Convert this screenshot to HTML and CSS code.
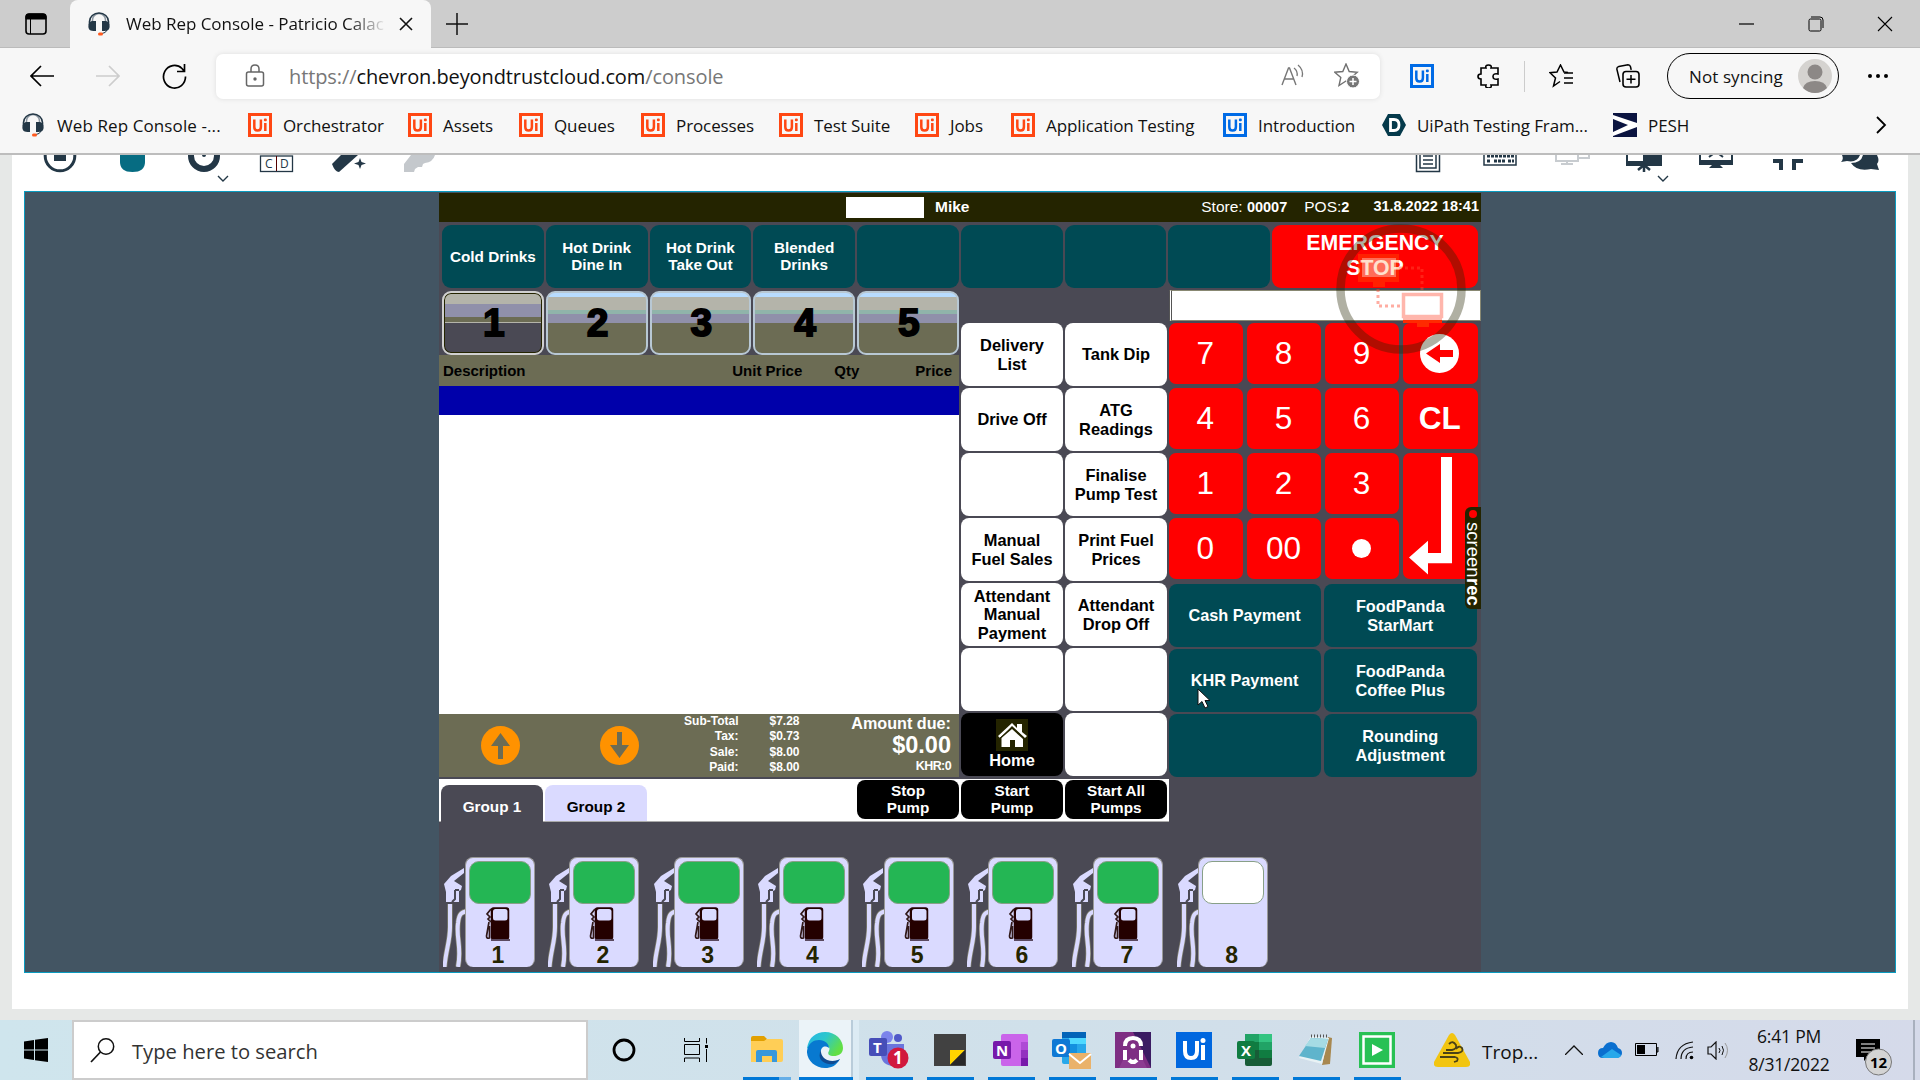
FILE: index.html
```html
<!DOCTYPE html>
<html lang="en">
<head>
<meta charset="utf-8">
<title>Web Rep Console</title>
<link rel="stylesheet" href="styles.css">
</head>
<body>
<svg class="defs" width="0" height="0">
  <symbol id="headset" viewBox="0 0 22 24"><path d="M4.500 14V8a6.500 6.500 0 0 1 13 0v6" fill="none" stroke="#8a95a0" stroke-width="1.500"/><path d="M1.500 13V9.500a9.500 8.500 0 0 1 19 0V13" fill="none" stroke="#233746" stroke-width="1.600"/><path d="M4 9h4v10H5.500C1 19 0 16 .5 13 1 10.500 2 9.500 4 9zM18 9h-4v10h2.500c4.500 0 5.500-3 5-6-.5-2.500-1.500-3.500-3.500-4z" fill="#233746"/><path d="M19 18q-1 3-5 3.500" fill="none" stroke="#233746"/><rect x="10" y="20.500" width="5" height="3" rx="1.500" fill="#ff5a1f"/></symbol>
  <symbol id="ui" viewBox="0 0 24 24"><path d="M1.500 1.500h21v21h-21z" fill="none" stroke="currentColor" stroke-width="3"/><path d="M6.300 6.500v7.500q0 3.600 3.300 3.600t3.300-3.600V6.500M17.300 10v8" fill="none" stroke="currentColor" stroke-width="2.500"/><rect x="15.900" y="5.400" width="2.900" height="2.900" rx="1" fill="currentColor"/></symbol>
  <symbol id="nozzle" viewBox="0 0 90 110"><path d="M1.500 110C3 92 7 85 7 70V47M15 110c4-20-2-28 0-44 1-10 4-11 10-12" fill="none" stroke="#828270" stroke-width="5.400"/><path d="M1.500 110C3 92 7 85 7 70V47M15 110c4-20-2-28 0-44 1-10 4-11 10-12" fill="none" stroke="#dadaff" stroke-width="4"/><path d="M8 19L21 11v5L11 24l8 5-1 4-2 1v11H3V35L1 27z" fill="#dadaff"/><path d="M12 33v9l-3 3M12 33h4" stroke="#4a4954" fill="none" stroke-width="2"/></symbol>
  <symbol id="pumpicon" viewBox="0 0 26 34"><rect x="6.500" y="1" width="17" height="31" rx="2" fill="#240000" stroke="#240000" stroke-width="1.500"/><rect x="8" y="2" width="14.500" height="11.500" rx="2.500" fill="#dadaff"/><path d="M6 2L2 7l3 3-2 2 3 3M4 15L1.500 29q0 3 3 2V19" fill="none" stroke="#301818" stroke-width="1.700"/><path d="M6 33h19" stroke="#5a4a60" stroke-width="2"/></symbol>
</svg>

<header class="tabstrip">
  <svg class="workspaces" width="22" height="22" viewBox="0 0 22 22"><rect x="1" y="1" width="20" height="20" rx="3" fill="none" stroke="#000" stroke-width="1.600"/><path d="M1 6V3.500Q1 1 4 1h14q3 0 3 2.500V6zM5.500 6v15" stroke="#000"/></svg>
  <div class="tab"><svg width="22" height="24"><use href="#headset"/></svg><span class="tab-title">Web Rep Console - Patricio Calac</span><svg width="14" height="14"><path d="M1 1l12 12M13 1L1 13" stroke="#111" stroke-width="1.600"/></svg></div>
  <svg class="newtab" width="22" height="22"><path d="M11 0v22M0 11h22" stroke="#111" stroke-width="1.500"/></svg>
  <div class="winctl">
    <svg width="16" height="16"><path d="M0 8h15" stroke="#000" stroke-width="1.200"/></svg>
    <svg width="16" height="16"><rect x="1" y="3" width="12" height="12" rx="1.500" fill="none" stroke="#000"/><path d="M3 1h9q3 0 3 3v8" fill="none" stroke="#000"/></svg>
    <svg width="16" height="16"><path d="M1 1l14 14M15 1L1 15" stroke="#000" stroke-width="1.100"/></svg>
  </div>
</header>

<nav class="toolbar">
  <svg class="nav" width="24" height="24"><path d="M24 12H1M11 2L1 12l10 10" fill="none" stroke="#000" stroke-width="1.700"/></svg>
  <svg class="nav" width="24" height="24"><path d="M0 12h23M13 2l10 10-10 10" fill="none" stroke="#cdcdcd" stroke-width="1.700"/></svg>
  <svg class="nav" width="25" height="25"><path d="M23.500 12.500A11 11.300 0 1 1 20 4.500L22 7M22.500 0v7.500H15" fill="none" stroke="#000" stroke-width="1.700"/></svg>
  <div class="address">
    <svg class="lock" width="20" height="24"><rect x="1.500" y="8" width="17" height="14" rx="2" fill="none" stroke="#666" stroke-width="1.500"/><path d="M6 8V5q0-4 4-4t4 4v3" fill="none" stroke="#666" stroke-width="1.500"/><circle cx="10" cy="15" r="1.700" fill="#666"/></svg>
    <span class="url">https://<b>chevron.beyondtrustcloud.com</b>/console</span>
    <svg width="24" height="24" class="read"><path d="M1 21L7.500 4h1L15 21M3.500 15h9" fill="none" stroke="#777" stroke-width="1.400"/><path d="M13 4q4 3 3 8M17 1q6 5 4 12" fill="none" stroke="#777" stroke-width="1.300"/></svg>
    <svg width="26" height="26"><path d="M12 1l3.200 7.500 8 .7-6 5.300 1.800 8L12 18l-7 4.500 1.800-8-6-5.300 8-.7z" fill="none" stroke="#707070" stroke-width="1.400"/><circle cx="19" cy="18.500" r="6.500" fill="#757575" stroke="#fff"/><path d="M19 15v7M15.500 18.500h7" stroke="#fff" stroke-width="1.500"/></svg>
  </div>
  <div class="tools">
    <svg class="blue" width="24" height="24"><use href="#ui"/></svg>
    <svg width="24" height="24"><path d="M4 4h5q-1-3 2.500-3T14 4h7v6q-5-1-5 2.500t5 2.500v6h-7q1 3-2.500 3T9 21H4v-6q-3 0-3-2.500T4 10z" fill="none" stroke="#000" stroke-width="1.600"/></svg>
    <i class="divider"></i>
    <svg width="25" height="24"><path d="M11 17.500L4.500 22l2-8L1 8.700l7-.7L11.500 1 15 8l4 .5M15 9h9M15 14h9M15 19h9" fill="none" stroke="#000" stroke-width="1.500"/></svg>
    <svg width="24" height="24"><path d="M4 18L.8 5q0-2 2-2.500L12 .8q2 0 2.500 2l.7 3" fill="none" stroke="#000" stroke-width="1.500"/><rect x="7" y="7.500" width="16" height="15.500" rx="3" fill="#f7f7f7" stroke="#000" stroke-width="1.600"/><path d="M15 11v8.500M10.500 15.300h9" stroke="#000" stroke-width="1.500"/></svg>
  </div>
  <div class="profile"><span>Not syncing</span><svg width="34" height="34"><circle cx="17" cy="17" r="17" fill="#d5d3d0"/><circle cx="17" cy="13" r="7.500" fill="#8c8886"/><path d="M5 29q2-7 12-7t12 7A17 17 0 0 1 5 29z" fill="#8c8886"/></svg></div>
  <svg class="more" width="22" height="6"><circle cx="3" cy="3" r="2" /><circle cx="11" cy="3" r="2"/><circle cx="19" cy="3" r="2"/></svg>
</nav>

<nav class="bookmarks">
  <a><svg width="22" height="24"><use href="#headset"/></svg><span>Web Rep Console -...</span></a>
  <a><svg width="24" height="24"><use href="#ui"/></svg><span>Orchestrator</span></a>
  <a><svg width="24" height="24"><use href="#ui"/></svg><span>Assets</span></a>
  <a><svg width="24" height="24"><use href="#ui"/></svg><span>Queues</span></a>
  <a><svg width="24" height="24"><use href="#ui"/></svg><span>Processes</span></a>
  <a><svg width="24" height="24"><use href="#ui"/></svg><span>Test Suite</span></a>
  <a><svg width="24" height="24"><use href="#ui"/></svg><span>Jobs</span></a>
  <a><svg width="24" height="24"><use href="#ui"/></svg><span>Application Testing</span></a>
  <a><svg class="blue" width="24" height="24"><use href="#ui"/></svg><span>Introduction</span></a>
  <a><svg width="24" height="24"><path d="M6 1h12l6 11-6 11H6L0 12z" fill="#053a4b"/><path d="M8.500 6.500H12q5 0 5 5.500t-5 5.500H8.500z" fill="none" stroke="#fff" stroke-width="2.800"/></svg><span>UiPath Testing Fram...</span></a>
  <a><svg width="24" height="24"><path d="M0 0h24v24H0z" fill="#0b1440"/><path d="M0 2l24 8v4L0 23v-4l15-7L0 6z" fill="#fff"/></svg><span>PESH</span></a>
  <svg class="overflow" width="11" height="18"><path d="M1 1l8 8-8 8" fill="none" stroke="#000" stroke-width="1.800"/></svg>
</nav>

<main class="page">
  <section class="console">
    <div class="session-tools">
      <div class="group">
        <svg width="72" height="30"><circle cx="36" cy="1" r="14.800" fill="none" stroke="#233746" stroke-width="3"/><path d="M30 0h12v6H30z" fill="#233746"/></svg>
        <svg width="72" height="30"><path d="M24 0h25v7q0 10-12.500 10T24 7z" fill="#066c82"/></svg>
        <svg width="72" height="30"><circle cx="36" cy="1" r="13" fill="none" stroke="#233746" stroke-width="6"/><circle cx="36" cy="0" r="2" fill="#233746"/><path d="M50 21l5 5 5-5" fill="none" stroke="#233746" stroke-width="1.400"/></svg>
        <svg width="72" height="30"><rect x="20.500" y="1" width="32" height="15.500" fill="none" stroke="#233746" stroke-width="1.300"/><path d="M36.500 1v15" stroke="#500"/><text x="25" y="13" class="cd">C</text><text x="40" y="13" class="cd">D</text></svg>
        <svg width="72" height="30"><path d="M29 0h17L27 17q-4 0-7-8z" fill="#233746"/><path d="M48 3l1.500 4L54 8.500 49.500 10 48 14l-1.500-4L42 8.500 46.500 7z" fill="#233746"/></svg>
        <svg width="72" height="30"><path d="M27 0h24q-2 7-10 8l-2 1-1 3h-4l-3 2-1 3h-10V9z" fill="#c4c8cc"/></svg>
      </div>
      <div class="group">
        <svg width="72" height="30"><path d="M24.500 0v16.500h23V0M28 0v13h16V0M31 1h10M31 5h10M31 9h10" fill="none" stroke="#233746" stroke-width="1.500"/></svg>
        <svg width="72" height="30"><path d="M20 0v10h32V0" fill="none" stroke="#233746" stroke-width="1.500"/><path d="M23 1h27M23 6h4m3 0h11m3 0h6" stroke="#233746" stroke-width="3" stroke-dasharray="3 1"/></svg>
        <svg width="72" height="30"><path d="M20 0v6h22V0M42 3h11V0M31 6v3m-6 0h12" fill="none" stroke="#c8ccd0" stroke-width="2"/></svg>
        <svg width="72" height="30"><path d="M18 0h36v11H18z" fill="#233746"/><path d="M20 0h15v6H20z" fill="#fff"/><path d="M36 9v8m-6-2l6-5 6 5" stroke="#233746" stroke-width="2.500" fill="none"/><path d="M50 21l5 5 5-5" fill="none" stroke="#233746" stroke-width="1.400"/></svg>
        <svg width="72" height="30"><path d="M19 0h34v10H19z" fill="#233746"/><path d="M21 0h30v5H21z" fill="#fff"/><path d="M29 2l4-3M43 2l-4-3" stroke="#233746" stroke-width="2"/><path d="M29 13h14l-5-5h-4z" fill="#233746"/></svg>
        <svg width="72" height="30"><path d="M21 6h8v9M51 6h-9v9" fill="none" stroke="#233746" stroke-width="4"/></svg>
        <svg width="72" height="30"><path d="M18 0h18q-3 8-13 6l-6 1q3-3 1-7z" fill="#233746"/><path d="M39 0h14q3 6 0 9l2 6-8-1q-14 3-20-6 10 0 12-8z" fill="#233746"/></svg>
      </div>
    </div>

    <div class="remote">
      <div class="pos">
        <div class="pos-head"><i class="mask"></i><b class="user">Mike</b><span class="store">Store: <b>00007</b></span><span class="till">POS:<b>2</b></span><b>31.8.2022 18:41</b></div>
        <div class="cats">
          <div>Cold Drinks</div><div>Hot Drink<br>Dine In</div><div>Hot Drink<br>Take Out</div><div>Blended<br>Drinks</div><div></div><div></div><div></div><div></div><div class="stop">EMERGENCY<br>STOP</div>
        </div>
        <div class="work">
          <div class="receipt">
            <div class="lanes"><div class="on">1</div><div>2</div><div>3</div><div>4</div><div>5</div></div>
            <div class="cols"><span>Description</span><span>Unit Price</span><span>Qty</span><span>Price</span></div>
            <div class="selected"></div>
            <div class="lines"></div>
            <div class="totals">
              <svg width="39" height="39"><circle cx="19.500" cy="19.500" r="19.500" fill="#ff9200"/><path d="M19.500 7l9.500 13h-7v13h-5V20h-7z" fill="#6c6c54"/></svg>
              <svg width="39" height="39"><circle cx="19.500" cy="19.500" r="19.500" fill="#ff9200"/><path d="M19.500 32l9.500-13h-7V6h-5v13h-7z" fill="#6c6c54"/></svg>
              <div class="sums"><span>Sub-Total</span><span>Tax:</span><span>Sale:</span><span>Paid:</span></div>
              <div class="sums amounts"><span>$7.28</span><span>$0.73</span><span>$8.00</span><span>$8.00</span></div>
              <div class="due"><span>Amount due:</span><strong>$0.00</strong><small>KHR:0</small></div>
            </div>
          </div>
          <div class="functions">
            <div>Delivery<br>List</div><div>Tank Dip</div>
            <div>Drive Off</div><div>ATG<br>Readings</div>
            <div></div><div>Finalise<br>Pump Test</div>
            <div>Manual<br>Fuel Sales</div><div>Print Fuel<br>Prices</div>
            <div>Attendant<br>Manual<br>Payment</div><div>Attendant<br>Drop Off</div>
            <div></div><div></div>
            <div class="home"><svg width="32" height="32"><path d="M0 0h32v32H0z" fill="#242400"/><path d="M2 17L16 4l5 5V5h5v8l5 4-2 2L16 7 4 19z" fill="#fff"/><path d="M5.500 19L16 10l11 10v8h-8v-7h-5v7H5.500z" fill="#fff"/><path d="M4 19L16 8.500 28 19" fill="none" stroke="#242400"/></svg>Home</div><div></div>
          </div>
          <div class="right">
            <div class="entry"></div>
            <div class="keypad">
              <div>7</div><div>8</div><div>9</div><div><svg width="39" height="39"><circle cx="19.500" cy="19.500" r="19.500" fill="#fff"/><path d="M6 19.500L20 10v6h13v7H20v6z" fill="red"/></svg></div>
              <div>4</div><div>5</div><div>6</div><div><b>CL</b></div>
              <div>1</div><div>2</div><div>3</div>
              <div class="enter"><svg width="44" height="120"><path d="M32 0h11v113H19v12L0 107l19-18v13h13z" transform="scale(1 .94)" fill="#fff"/></svg></div>
              <div>0</div><div>00</div><div><i class="dot"></i></div>
            </div>
            <div class="payments"><div>Cash Payment</div><div>FoodPanda<br>StarMart</div><div>KHR Payment</div><div>FoodPanda<br>Coffee Plus</div><div></div><div>Rounding<br>Adjustment</div></div>
          </div>
        </div>
        <div class="pumpbar">
          <div class="group-tab active">Group 1</div><div class="group-tab">Group 2</div>
          <div class="pump-action first">Stop<br>Pump</div><div class="pump-action">Start<br>Pump</div><div class="pump-action">Start All<br>Pumps</div>
        </div>
        <div class="pumps">
          <div class="pump"><svg class="hose" width="90" height="110"><use href="#nozzle"/></svg><div class="body"><i></i><svg width="26" height="34"><use href="#pumpicon"/></svg><b>1</b></div></div>
          <div class="pump"><svg class="hose" width="90" height="110"><use href="#nozzle"/></svg><div class="body"><i></i><svg width="26" height="34"><use href="#pumpicon"/></svg><b>2</b></div></div>
          <div class="pump"><svg class="hose" width="90" height="110"><use href="#nozzle"/></svg><div class="body"><i></i><svg width="26" height="34"><use href="#pumpicon"/></svg><b>3</b></div></div>
          <div class="pump"><svg class="hose" width="90" height="110"><use href="#nozzle"/></svg><div class="body"><i></i><svg width="26" height="34"><use href="#pumpicon"/></svg><b>4</b></div></div>
          <div class="pump"><svg class="hose" width="90" height="110"><use href="#nozzle"/></svg><div class="body"><i></i><svg width="26" height="34"><use href="#pumpicon"/></svg><b>5</b></div></div>
          <div class="pump"><svg class="hose" width="90" height="110"><use href="#nozzle"/></svg><div class="body"><i></i><svg width="26" height="34"><use href="#pumpicon"/></svg><b>6</b></div></div>
          <div class="pump"><svg class="hose" width="90" height="110"><use href="#nozzle"/></svg><div class="body"><i></i><svg width="26" height="34"><use href="#pumpicon"/></svg><b>7</b></div></div>
          <div class="pump idle"><svg class="hose" width="90" height="110"><use href="#nozzle"/></svg><div class="body"><i></i><svg width="26" height="34"></svg><b>8</b></div></div>
        </div>
        <svg class="watermark" width="132" height="132"><circle cx="66" cy="66" r="60.500" fill="none" stroke="#242400" stroke-opacity=".36" stroke-width="8.500"/><path d="M23 31h41v28H50v5H38v-5H23z" fill="#ff6a00" fill-opacity=".3"/><path d="M27 35h34v19H27z" fill="#fff" fill-opacity=".35"/><path d="M64 45h23v26M43 66v17h24" fill="none" stroke="#ff4a30" stroke-opacity=".45" stroke-width="3" stroke-dasharray="3 3"/><path d="M68.500 71.500h38v22h-38z" fill="none" stroke="#ffb6ac" stroke-width="3.500"/><path d="M68 94h39v3H68z" fill="#ffb6ac"/><path d="M68 97h39v3H94v4H82v-4H68z" fill="#ff2a00"/></svg>
        <div class="rec"><i></i>screen<b>rec</b></div>
        <svg class="cursor" width="14" height="22"><path d="M1 1v16l4-3.500L8 20l3-1.500-3-6h5z" fill="#fff" stroke="#111"/></svg>
      </div>
    </div>
  </section>
</main>

<footer class="taskbar">
  <div class="start"><svg width="24" height="24"><path d="M0 3.500L10 2v9.500H0zM11 1.800L24 0v11.500H11zM0 12.500h10V22L0 20.500zM11 12.500h13V24l-13-1.800z"/></svg></div>
  <div class="search"><svg width="25" height="25"><circle cx="16" cy="8.500" r="7.700" fill="none" stroke="#111" stroke-width="1.500"/><path d="M10.500 14L1 24" stroke="#111" stroke-width="1.700"/></svg><span>Type here to search</span></div>
  <div class="sys"><svg width="24" height="24"><circle cx="12" cy="12" r="10" fill="none" stroke="#000" stroke-width="2.800"/></svg></div>
  <div class="sys"><svg width="24" height="24"><path d="M.5 0v3.500h15V0M.5 6.500h15v10H.5zM.5 24v-4h15v4M22.500 0v5.500M22.500 11v13" fill="none" stroke="#000"/><path d="M21 7h3v3h-3z"/></svg></div>
  <div class="app folder"><svg width="32" height="28"><path d="M0 2q0-2 2-2h11l3 3-3 4H0z" fill="#e2a000"/><path d="M0 5h13l3-2h14q2 0 2 2v19q0 2-2 2H0z" fill="#ffce56"/><path d="M5 26V16q0-2 2-2h17q2 0 2 2v10h-5v-6H11v6z" fill="#3898dc"/></svg></div>
  <div class="app edge"><svg width="36" height="36"><defs><linearGradient id="eg" x1="0" x2="1" y1="0" y2=".5"><stop stop-color="#25b4e8"/><stop offset=".5" stop-color="#2cc7cc"/><stop offset="1" stop-color="#62df45"/></linearGradient></defs><path d="M0 16C2 5 9 0 18 0c11 0 18 8 18 16 0 6-5 8-9 8-5 0-7-2-5-5 2-4-2-6-5-6-6 0-9 6-17 3z" fill="url(#eg)"/><path d="M0 19C1 11 7 8 12 8c6 0 10 4 10 8-6-4-9 1-8 6 2 8 13 9 19 5-4 7-9 9-15 9C8 36-.5 28 0 19z" fill="#0879d0"/><path d="M14 18c-4 8 1 13 8 14 4 1 8-1 11-5-9 5-20 0-19-9z" fill="#104b91"/></svg></div>
  <div class="app"><svg width="40" height="38"><circle cx="18" cy="6" r="6" fill="#7b83eb"/><circle cx="29" cy="7" r="4" fill="#5059c9"/><path d="M12 13h23v12q0 10-9 10-14 0-14-12z" fill="#6a74dc"/><rect y="7" width="18" height="18" rx="2" fill="#464eb8"/><text x="4" y="22" class="glyph">T</text><circle cx="29" cy="27" r="10.500" fill="#d1183d"/><text x="24" y="33" class="badge">1</text></svg></div>
  <div class="app"><svg width="32" height="32"><path d="M0 0h32v32H0z" fill="#414141"/><path d="M16 16h15L16 31z" fill="#ffd500"/><path d="M31 16v15H16z" fill="#282828"/></svg></div>
  <div class="app"><svg width="36" height="34"><rect x="8" y="1" width="27" height="32" rx="2" fill="#ca64ea"/><path d="M28 9h7v8h-7z" fill="#ae4bd5"/><path d="M28 17h7v8h-7z" fill="#9332bf"/><path d="M28 25h7v8h-7z" fill="#7719aa"/><rect y="8" width="18" height="18" rx="2" fill="#7719aa"/><text x="3" y="23" class="glyph">N</text></svg></div>
  <div class="app"><svg width="40" height="38"><rect x="10" y="1" width="24" height="32" rx="2" fill="#28a8ea"/><path d="M10 1h24v6H10z" fill="#0364b8"/><path d="M17 7h17v6H17z" fill="#50d9ff"/><path d="M10 13h15v10H10z" fill="#1490df"/><rect y="8" width="18" height="18" rx="2" fill="#0f78d4"/><text x="3" y="23" class="glyph">O</text><path d="M17 22h22v16H17z" fill="#eab26a"/><path d="M17 23l11 9 11-9" stroke="#fff" stroke-width="2" fill="none"/></svg></div>
  <div class="app"><svg width="36" height="36"><path d="M0 0h36v36H0z" fill="#7e2e83"/><path d="M18 0h18v36z" fill="#3b1c63"/><path d="M8 28h20l4 8H4z" fill="#8c3c91"/><path d="M10 14q0-8 8-8t8 8M10 18v10M26 18v10" fill="none" stroke="#fff" stroke-width="4"/><path d="M14 28q4 4 8 0" fill="none" stroke="#fff" stroke-width="4"/><circle cx="18" cy="14" r="2.500" fill="#fff"/></svg></div>
  <div class="app"><svg width="36" height="36"><path d="M0 0h36v36H0z" fill="#0067df"/><path d="M9 9v10q0 7 6 7t6-7V9M27 13v15" fill="none" stroke="#fff" stroke-width="4"/><circle cx="27" cy="8.500" r="2.500" fill="#fff"/></svg></div>
  <div class="app"><svg width="36" height="34"><rect x="8" y="1" width="27" height="32" rx="2" fill="#185c37"/><path d="M8 1h14v8H8z" fill="#21a366"/><path d="M22 1h13v8H22z" fill="#33c481"/><path d="M8 9h14v8H8z" fill="#107c41"/><path d="M22 9h13v8H22z" fill="#21a366"/><path d="M22 17h13v8H22z" fill="#107c41"/><rect y="8" width="18" height="18" rx="2" fill="#107c41"/><text x="4" y="23" class="glyph">X</text></svg></div>
  <div class="app"><svg width="34" height="34"><path d="M29 4l4 1-2 26-8 1z" fill="#a88850"/><path d="M12 3l18 2-7 26-23-6z" fill="#e8f2f5"/><path d="M12 5l17 1-7 22-22-5z" fill="#5fb4cc"/><path d="M12 5l17 1-3 9-20-2z" fill="#a6dbe4"/><path d="M12 3h17" stroke="#555" stroke-width="3" stroke-dasharray="1 2"/></svg></div>
  <div class="app"><svg width="36" height="36"><path d="M0 0h36v36H0z" fill="#28c154"/><path d="M4.500 4.500h27v27h-27z" fill="none" stroke="#fff" stroke-width="2.500"/><path d="M13 12l11 6-11 6z" fill="#fff"/></svg></div>
  <div class="tray">
    <svg width="36" height="34"><path d="M15 2q3-4 6 0l15 27q1 5-4 5H4q-5 0-4-5z" fill="#f2c511"/><path d="M6 24h15q4 1 2 4l-3 1M9 20h15q6-1 4-5-3-3-6 1M12 17h6q5-1 4-5-3-5-7-1" fill="none" stroke="#4a4217" stroke-width="1.800"/></svg>
    <span class="weather">Trop...</span>
    <svg class="up" width="18" height="10"><path d="M0 10L9 1l9 9" fill="none" stroke="#111" stroke-width="1.300"/></svg>
    <svg class="cloud" width="24" height="16"><path d="M5 16q-5 0-5-5t5-5q3-6 8-6t7 6q4 1 4 5t-5 5z" fill="#0a6fcf"/><path d="M3 15l11-8 9 6q-1 3-4 3H6z" fill="#28a8ea"/></svg>
    <svg class="battery" width="24" height="14"><path d="M.5.5h21v12H.5zM22 4v5h1V4" fill="none" stroke="#000"/><path d="M2 2h8v9H2z"/></svg>
    <svg class="wifi" width="19" height="19"><path d="M1 18Q2 3 18 1M6 18Q6 7 18 6M11 18q0-7 7-7" fill="none" stroke="#111" stroke-width="1.200"/><circle cx="16.500" cy="16.500" r="1.800"/></svg>
    <svg class="sound" width="23" height="19"><path d="M1 6h3l5-5v17l-5-5H1z" fill="none" stroke="#111" stroke-width="1.200"/><path d="M12 7q2 2.500 0 5M15 5q3 4 0 9" fill="none" stroke="#111"/><path d="M18 2q5 7 0 15" fill="none" stroke="#999"/></svg>
    <div class="clock"><span>6:41 PM</span><span>8/31/2022</span></div>
    <svg class="notes" width="40" height="37"><path d="M0 0h24v18H12l-4 4v-4H0z"/><path d="M5 5h14M5 9h14M5 13h10" stroke="#fff"/><circle cx="22.500" cy="23" r="13" fill="#d4d4d4" stroke="#777"/><text x="14" y="29" class="count">12</text></svg>
    <i class="peek"></i>
  </div>
</footer>
</body>
</html>
```
FILE: styles.css
```css
* { box-sizing: border-box; }
body { margin: 0; width: 1920px; height: 1080px; overflow: hidden; background: #e6e8e7; color: #111; font: 17px "Open Sans", "Noto Sans", sans-serif; display: flex; flex-direction: column; }
svg { display: block; flex: none; }
.defs { position: absolute; }
.blue { color: #006be6; }

/* Browser chrome */
.tabstrip { height: 48px; flex: none; background: #cdcdcd; display: flex; align-items: center; border-bottom: 1px solid #bbb; }
.workspaces { margin: 0 23px 0 25px; }
.tab { width: 361px; height: 48px; background: #f7f7f7; border-radius: 8px 8px 0 0; display: flex; align-items: center; padding: 0 18px; }
.tab-title { width: 261px; margin: 0 12px 0 16px; overflow: hidden; white-space: nowrap; letter-spacing: -.03px; mask-image: linear-gradient(90deg, #000 85%, transparent 100%); }
.newtab { margin-left: 15px; }
.winctl { margin-left: auto; margin-right: 27px; display: flex; gap: 53px; }
.toolbar { height: 56px; flex: none; background: #f7f7f7; display: flex; align-items: center; padding-left: 30px; }
.nav { margin-right: 42px; }
.nav + .nav + .nav { margin-right: 29px; }
.address { width: 1164px; height: 45px; border-radius: 7px; background: #fff; box-shadow: 0 0 5px #ddd; display: flex; align-items: center; padding: 0 20px 0 29px; }
.url { flex: 1; margin-left: 24px; padding-top: 1px; font-size: 20px; color: #777; letter-spacing: -.1px; }
.url b { font-weight: 400; color: #111; }
.read { margin-right: 29px; }
.tools { margin-left: 30px; display: flex; align-items: center; }
.tools svg { margin-right: 43px; }
.tools .divider { width: 1px; height: 31px; margin: 0 24px 0 -20px; background: #ccc; }
.tools svg:last-child { margin-right: 0; margin-left: -1px; }
.profile { width: 172px; height: 46px; margin-left: 27px; border: 1.5px solid #000; border-radius: 23px; display: flex; align-items: center; justify-content: space-between; padding: 0 6px 0 21px; letter-spacing: .1px; }
.more { margin-left: 28px; }
.bookmarks { height: 51px; flex: none; background: #f7f7f7; border-bottom: 2px solid #bdbdbd; display: flex; align-items: center; padding: 0 33px 7px 22px; white-space: nowrap; letter-spacing: -.1px; }
.bookmarks a { display: flex; align-items: center; width: 136px; color: #ff4713; }
.bookmarks a .blue { color: #006be6; }
.bookmarks a span { margin-left: 11px; color: #111; }
.bookmarks a:nth-child(1) { width: 226px; letter-spacing: .1px; }
.bookmarks a:nth-child(1) span { margin-left: 13px; }
.bookmarks a:nth-child(2) { width: 160px; }
.bookmarks a:nth-child(3) { width: 111px; }
.bookmarks a:nth-child(4) { width: 122px; }
.bookmarks a:nth-child(5) { width: 138px; }
.bookmarks a:nth-child(7) { width: 96px; }
.bookmarks a:nth-child(8) { width: 212px; }
.bookmarks a:nth-child(9) { width: 159px; }
.bookmarks a:nth-child(10) { width: 231px; }
.overflow { margin-left: auto; }

/* Console page */
.page { height: 865px; flex: none; padding: 0 12px 11px; }
.console { height: 854px; background: #fff; padding: 0 12px; }
.session-tools { height: 36px; display: flex; justify-content: space-between; }
.group { display: flex; }
.cd { font: 12px "Open Sans", sans-serif; fill: #233746; }
.remote { height: 782px; border: 1px solid #0a9bc0; background: #435563; padding: 1px 0 0 414px; }
.pos { position: relative; width: 1042px; height: 779px; background: #4a4954; color: #fff; font: bold 15.3px/17px "Liberation Sans", Arial, sans-serif; }
.pos-head { height: 29px; background: #242400; display: flex; align-items: center; padding-right: 2px; font-size: 14.500px; font-weight: 400; padding-bottom: 2px; }
.mask { width: 78px; height: 21px; background: #fff; margin: 2px 11px 0 407px; }
.user { font-size: 15.500px; flex: 1; }
.store, .till { font-size: 15.500px; }
.pos-head span b { font-size: 14.500px; }
.store { margin-right: 17px; }
.till { margin-right: 24px; }
.cats { display: grid; grid-template-columns: repeat(8, 101.750px) 206px; gap: 2px; margin: 3px 0 2px 3px; height: 63px; text-align: center; }
.cats div { background: #004a54; border-radius: 9px; display: flex; align-items: center; justify-content: center; padding-bottom: 1px; }
.cats .stop { background: red; font-size: 21.300px; line-height: 25px; padding-bottom: 1px; }
.work { display: flex; height: 487px; }
.receipt { width: 520px; padding-top: 1px; display: flex; flex-direction: column; }
.lanes { height: 64px; display: grid; grid-template-columns: repeat(5, 101.750px); gap: 2px; padding-left: 3px; color: #000; font-size: 39px; text-align: center; }
.lanes div { border-radius: 9px; line-height: 59px; padding-left: 2px; -webkit-text-stroke: 1.800px #000; border: 2px solid #b8c8d4; background: linear-gradient(#b8dcff 4px, #b4b4aa 4px 17px, #90b4aa 17px 21px, #9090aa 21px 30px, #6c6c54 30px); }
.lanes .on { border-color: #d0d0d0; box-shadow: inset 0 0 0 1px #242400; background: linear-gradient(#b4b4aa 11px, #9090aa 11px 24px, #6c6c54 24px 29px, #b4b4aa 29px 30px, #4a4954 30px); }
.cols { height: 31px; background: #6c6c54; color: #000; font-size: 15px; display: flex; align-items: center; padding: 0 7px 1px 4px; }
.cols span:nth-child(1) { flex: 1; }
.cols span:nth-child(3) { margin: 0 56px 0 32px; }
.selected { height: 29px; background: #0000aa; }
.lines { height: 299px; background: #fff; }
.totals { height: 63px; background: #6c6c54; display: flex; align-items: center; padding-left: 41.500px; }
.totals > svg + svg { margin-left: 80px; }
.sums { width: 61px; margin-left: 39px; margin-bottom: 2px; display: flex; flex-direction: column; align-items: flex-end; font-size: 12px; line-height: 15.200px; }
.amounts { margin-left: 0; }
.due { flex: 1; padding-right: 8px; margin-bottom: 3px; display: flex; flex-direction: column; align-items: flex-end; font-size: 16.200px; line-height: 18px; }
.due strong { font-size: 23.500px; line-height: 26px; }
.due small { font-size: 12.500px; line-height: 16px; letter-spacing: -.6px; }
.functions { width: 208px; padding: 33px 0 0 2px; display: grid; grid-template-columns: repeat(2, 102px); grid-template-rows: repeat(7, 63px); gap: 2px; text-align: center; color: #000; font-size: 16.400px; line-height: 18.400px; }
.functions div { background: #fff; border-radius: 8px; display: flex; flex-direction: column; align-items: center; justify-content: center; }
.functions .home { background: #000; color: #fff; }
.right { flex: 1; padding-left: 2px; }
.entry { height: 31px; background: #fff; border: 1px solid #888872; border-left: 3px double #555; margin-bottom: 2px; }
.keypad { margin-left: -.5px; display: grid; grid-template-columns: repeat(4, 74.500px); grid-template-rows: repeat(4, 61px); gap: 4px 3.700px; font-size: 31.500px; font-weight: 400; }
.keypad div { background: red; border-radius: 7px; display: flex; align-items: center; justify-content: center; padding: 0 1px 1px 0; }
.keypad .enter { grid-column: 4; grid-row: 3 / 5; padding: 2px 19px 0 0; }
.dot { width: 19px; height: 19px; border-radius: 50%; background: #fff; }
.payments { display: grid; grid-template-columns: 152px 152.500px; grid-template-rows: repeat(3, 63px); gap: 2px 3.500px; margin: 5px 0 0 -.5px; text-align: center; font-size: 16.300px; line-height: 18.400px; }
.payments div { background: #004a54; border-radius: 8px; display: flex; align-items: center; justify-content: center; }
.pumpbar { width: 730px; height: 43px; margin-top: 2px; background: #fff; border-bottom: 1px solid #aaa; display: flex; align-items: flex-end; padding-left: 2px; text-align: center; }
.group-tab { width: 102px; height: 36px; line-height: 44px; margin: 0 1px -1px 0; border-radius: 8px 8px 0 0; background: #dadaff; color: #000; }
.group-tab.active { background: #4a4954; color: #fff; height: 37px; }
.group-tab + .group-tab { margin-left: 1px; margin-bottom: 0; }
.pump-action { width: 102px; height: 39px; margin: 0 2px 2px 0; padding-top: 2px; background: #000; border-radius: 8px; }
.first { margin-left: auto; }
.pumps { display: flex; padding: 35px 0 0 4px; gap: 14.800px; }
.pump { position: relative; width: 90px; height: 110px; padding-left: 21.500px; }
.hose { position: absolute; left: 0; top: 0; }
.body { position: relative; width: 70px; height: 110px; background: #dadaff; border: 1px solid #9a9a98; border-bottom: 0; border-radius: 8px; display: flex; flex-direction: column; align-items: center; padding-top: 3px; color: #242400; }
.body i { width: 62px; height: 43px; background: #24b654; border: 1px solid #88a088; border-radius: 10px; margin-bottom: 3px; }
.body svg { margin-right: 4px; }
.idle .body i { background: #fff; }
.body b { font-size: 23px; line-height: 23px; margin: 3px 3px 0 0; }
.watermark { position: absolute; left: 896px; top: 30px; }
.rec { position: absolute; right: 0; top: 314px; width: 16px; height: 102px; border-radius: 6px 0 0 6px; background: #242400; writing-mode: vertical-rl; font-size: 18.500px; font-weight: 400; line-height: 16px; padding-top: 3px; display: flex; align-items: center; }
.rec i { width: 8px; height: 8px; border-radius: 50%; background: red; margin-bottom: 4px; }
.cursor { position: absolute; left: 758px; top: 495px; }

/* Windows taskbar */
.taskbar { height: 60px; flex: none; background: linear-gradient(90deg, #cfe5ed, #d0e0ea 55%, #d5daea); display: flex; }
.start, .sys { width: 72px; display: flex; align-items: center; justify-content: center; }
.search { width: 516px; background: #fff; border: 2px solid #ccc; display: flex; align-items: center; padding-left: 16px; font-size: 20.200px; color: #333; }
.search span { margin-left: 17px; padding-top: 2px; }
.app { width: 61px; height: 60px; padding-right: 1px; display: flex; align-items: center; justify-content: center; background: linear-gradient(#0078d7, #0078d7) 7px 57px / 47px 3px no-repeat; }
.folder { width: 67px; padding-left: 3px; background: linear-gradient(90deg, #0078d7 36px, #65aee7 36px) 11px 57px / 48px 3px no-repeat; }
.edge { width: 60px; padding-right: 8px; background: linear-gradient(#0078d7, #0078d7) 0 57px / 54px 3px no-repeat, linear-gradient(90deg, #ebf3f8 52px, #b9ccda 52px 54px, #dcebf4 54px); }
.glyph { font: bold 15px "Open Sans", sans-serif; fill: #fff; }
.badge { font: bold 17px "Open Sans", sans-serif; fill: #fff; }
.count { font: bold 15px "Open Sans", sans-serif; }
.tray { flex: 1; display: flex; align-items: center; padding-left: 26px; }
.weather { width: 83px; padding: 4px 0 0 12px; font-size: 19px; }
.up { margin-right: 15px; margin-left: 12px; }
.battery { margin: 0 16px 0 13px; }
.sound { margin: 0 14px 0 13px; }
.clock { width: 90px; display: flex; flex-direction: column; align-items: center; font-size: 17.500px; line-height: 28px; letter-spacing: -.2px; }
.notes { margin: 15px 0 0 22px; }
.peek { width: 2px; height: 60px; margin-left: 17px; background: #a8b0be; }
```
